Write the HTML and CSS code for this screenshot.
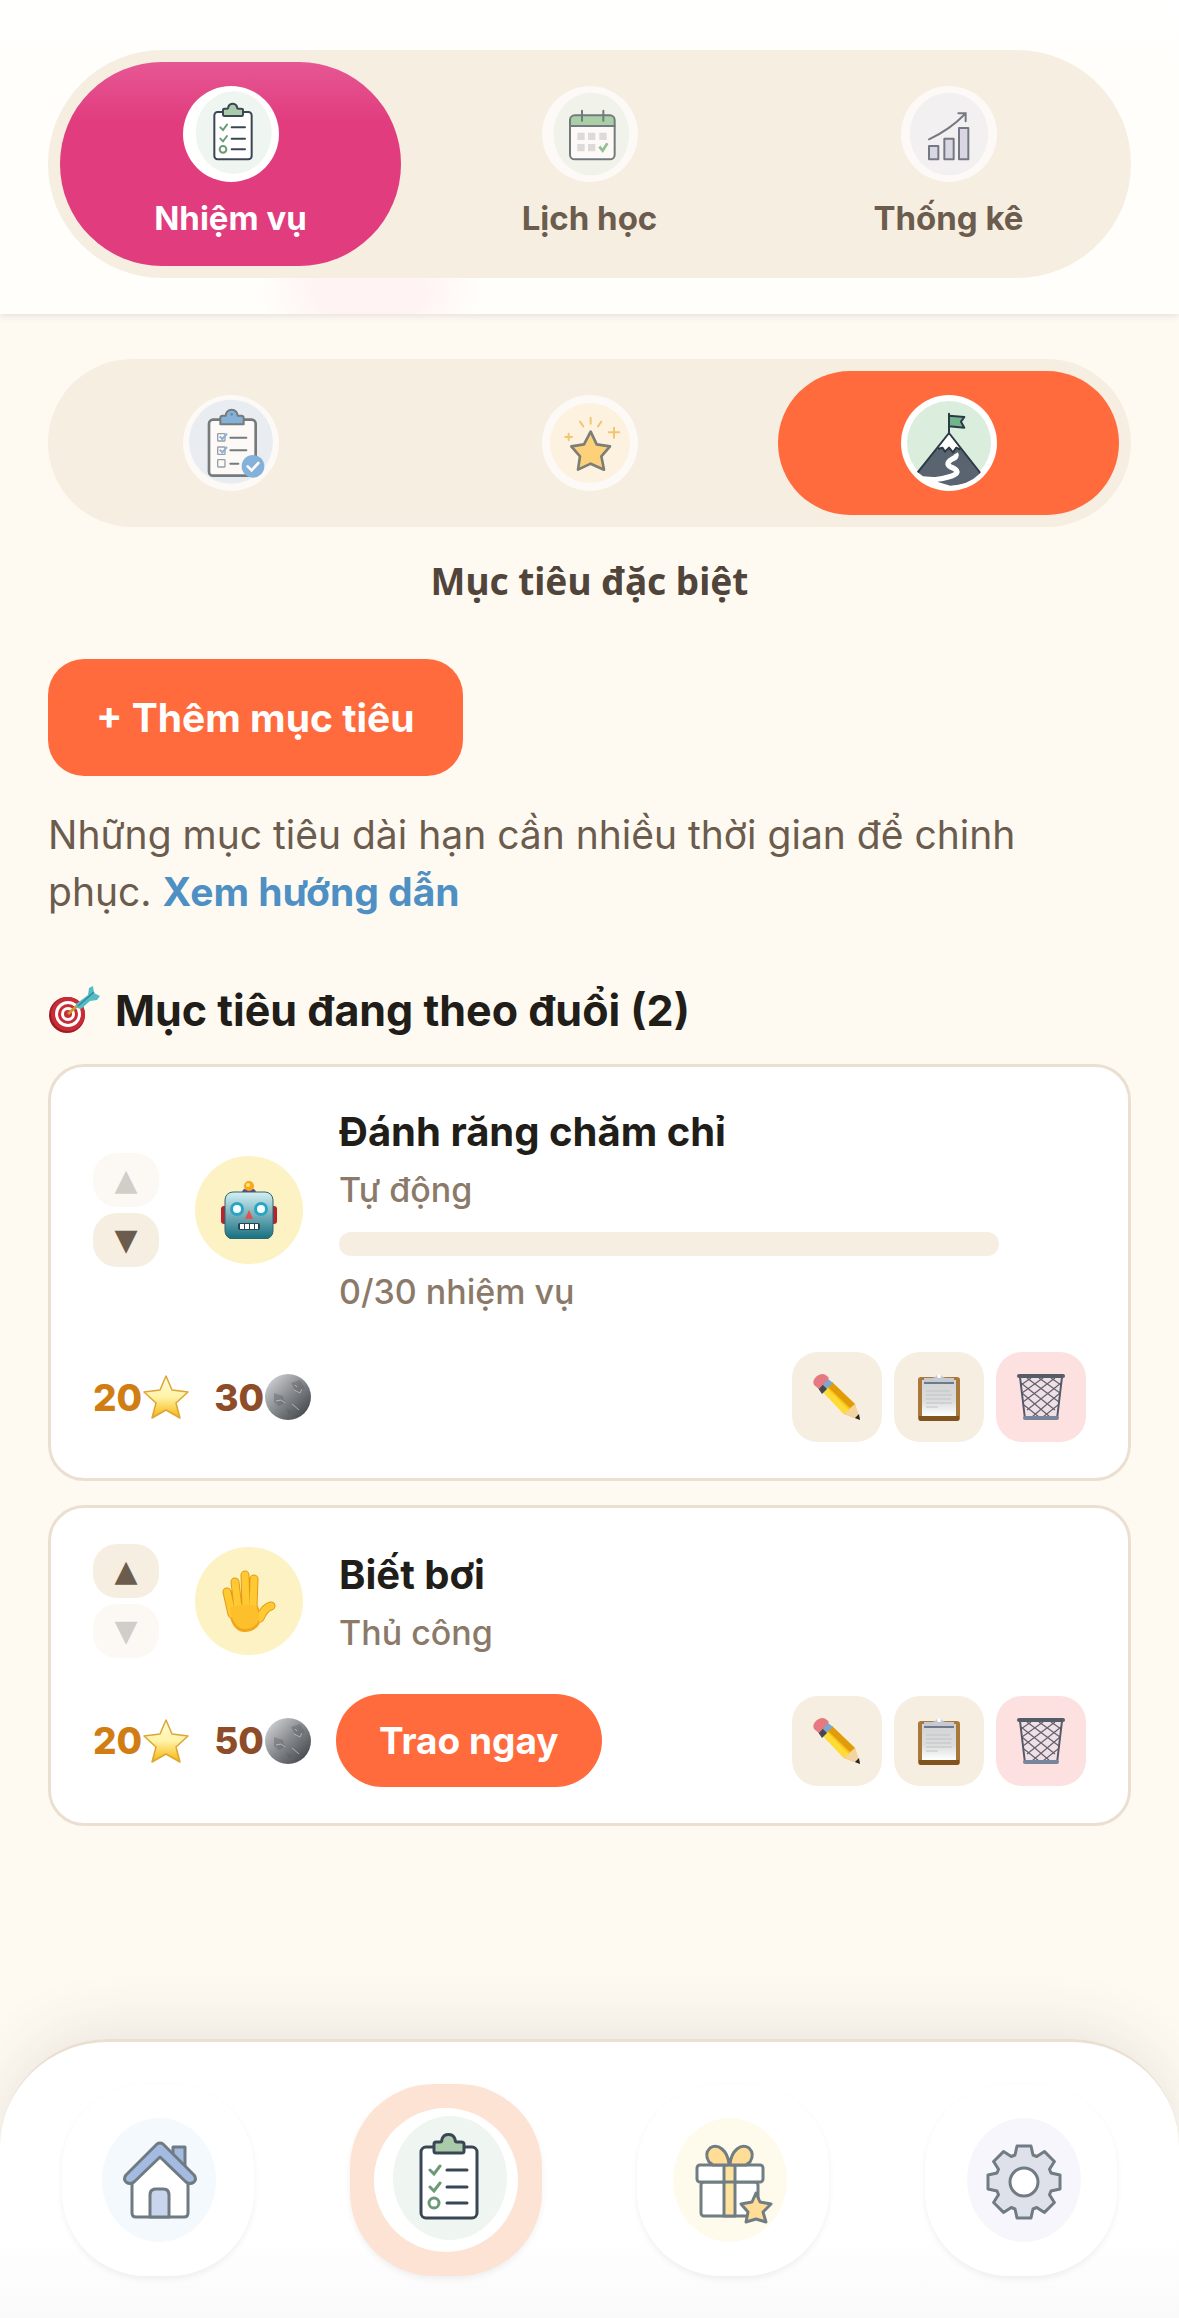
FILE: index.html
```html
<!DOCTYPE html>
<html lang="vi">
<head>
  <meta charset="UTF-8">
  <meta name="viewport" content="width=device-width, initial-scale=1.0">
  <title>Mục tiêu đặc biệt</title>
  <link rel="stylesheet" href="styles.css">
</head>
<body>

<!-- Icon dùng chung -->
<svg class="sprite" aria-hidden="true">
  <defs>
    <linearGradient id="g-star" x1="0" y1="0" x2="0" y2="1">
      <stop offset="0" stop-color="#fffbe0"/><stop offset=".5" stop-color="#fff3a6"/><stop offset="1" stop-color="#f7b50a"/>
    </linearGradient>
    <linearGradient id="g-moon" x1="0" y1="0" x2="1" y2="1">
      <stop offset="0" stop-color="#dfe1e4"/><stop offset=".5" stop-color="#85888c"/><stop offset="1" stop-color="#34373b"/>
    </linearGradient>
    <linearGradient id="g-robot" x1="0" y1="0" x2="0" y2="1">
      <stop offset="0" stop-color="#d3f1f5"/><stop offset=".45" stop-color="#7fb4bf"/><stop offset="1" stop-color="#156f80"/>
    </linearGradient>
    <linearGradient id="g-paper" x1="0" y1="0" x2="0" y2="1">
      <stop offset="0" stop-color="#d2d3d4"/><stop offset=".6" stop-color="#dcdddd"/><stop offset="1" stop-color="#ffffff"/>
    </linearGradient>
  </defs>

  <symbol id="i-list" viewBox="0 0 144 144">
    <ellipse cx="76" cy="70" rx="57" ry="62" fill="#eff5f0"/>
    <rect x="47" y="39" width="56" height="71" rx="5" fill="#fff" stroke="#3b4655" stroke-width="3"/>
    <path d="M60 36q0-2 2-2h4q2 0 2-3a7 7 0 0 1 13 0q0 3 2 3h4q3 0 3 2v7q0 2-2 2H62q-2 0-2-2z" fill="#a9cbaa" stroke="#3b4655" stroke-width="3"/>
    <path d="M56 62l4 4 6-8M56 79l4 4 6-8" fill="none" stroke="#6c9a76" stroke-width="3" stroke-linecap="round"/>
    <circle cx="60" cy="95" r="5" fill="none" stroke="#6c9a76" stroke-width="3"/>
    <path d="M73 62h20M73 79h20M73 95h20" stroke="#3b4655" stroke-width="3" stroke-linecap="round"/>
  </symbol>

  <symbol id="i-calendar" viewBox="0 0 144 144">
    <ellipse cx="74" cy="72" rx="57" ry="62" fill="#f0f6ee"/>
    <rect x="42" y="44" width="67" height="66" rx="7" fill="#fff"/>
    <path d="M42 60v-9q0-7 7-7h53q7 0 7 7v9z" fill="#8bc28f"/>
    <path d="M42 60h67M60 37v15M92 37v15" stroke="#3c4a56" stroke-width="3" stroke-linecap="round"/>
    <rect x="42" y="44" width="67" height="66" rx="7" fill="none" stroke="#3c4a56" stroke-width="3"/>
    <path d="M53 70h11v11H53zM69 70h11v11H69zM86 70h11v11H86zM53 87h11v11H53zM69 87h11v11H69z" fill="#d3d2d6"/>
    <path d="M86 91l5 6 7-11" fill="none" stroke="#69ad72" stroke-width="4"/>
  </symbol>

  <symbol id="i-chart" viewBox="0 0 144 144">
    <ellipse cx="72" cy="72" rx="59" ry="62" fill="#f3f1f9"/>
    <g fill="#cfcde6" stroke="#3f4a5a" stroke-width="3" stroke-linejoin="round">
      <rect x="42" y="90" width="14" height="20"/>
      <rect x="65" y="79" width="14" height="31"/>
      <rect x="87" y="63" width="14" height="47"/>
    </g>
    <path d="M42 80Q74 65 96 42M86 41h11v12" fill="none" stroke="#3f4a5a" stroke-width="3" stroke-linecap="round"/>
  </symbol>

  <symbol id="i-tasks" viewBox="0 0 144 144">
    <circle cx="72" cy="70" r="63" fill="#e4edf8"/>
    <rect x="39" y="37" width="70" height="84" rx="6" fill="#fff" stroke="#3f4a50" stroke-width="4"/>
    <path d="M56 34q0-3 4-3h4a9 9 0 0 1 18 0h5q4 0 4 3v10H56z" fill="#5598d8" stroke="#3f4a50" stroke-width="3" stroke-linejoin="round"/>
    <circle cx="73" cy="29" r="2" fill="#2f5e90"/>
    <g fill="none" stroke="#6c7f94" stroke-width="2">
      <rect x="52" y="58" width="11" height="11" rx="1"/>
      <rect x="52" y="78" width="11" height="11" rx="1"/>
      <rect x="52" y="97" width="11" height="11" rx="1"/>
    </g>
    <path d="M55 62l4 4 7-8M55 82l4 4 7-8" fill="none" stroke="#5e95d0" stroke-width="3"/>
    <path d="M71 64h24M71 83h24M71 103h12" stroke="#3f4a50" stroke-width="3" stroke-linecap="round"/>
    <circle cx="105" cy="107" r="17" fill="#5598d8"/>
    <path d="M97 107l6 6 10-11" fill="none" stroke="#fff" stroke-width="4" stroke-linecap="round"/>
  </symbol>

  <symbol id="i-star" viewBox="0 0 144 144">
    <circle cx="72" cy="72" r="60" fill="#fff5df"/>
    <path d="M73 55l9 19 20 3-13 15 4 20-20-9-19 9 3-20-13-15 19-3z" fill="#ffc54e" stroke="#4a4f4c" stroke-width="4" stroke-linejoin="round"/>
    <path d="M73 34v9M57 40l5 7M89 40l-5 7M108 49v15M100 56h16M40 58v10M35 63h10" stroke="#f2b544" stroke-width="3" stroke-linecap="round"/>
  </symbol>

  <symbol id="i-mountain" viewBox="0 0 144 144">
    <clipPath id="c-round"><circle cx="72" cy="72" r="65"/></clipPath>
    <g clip-path="url(#c-round)">
      <circle cx="72" cy="72" r="63" fill="#dbeedd"/>
      <path d="M15 122l14-3 90-2v30H15z" fill="#fff"/>
      <path d="M72 57L25 116l8 6 30 2-9 6 20 6q34-3 45-18z" fill="#5a6470"/>
      <path d="M72 57L54 82l7-3 5 6 6-6 6 8 5-8 6 2z" fill="#fff"/>
      <path d="M82 88q3 5-5 8-14 8 2 14 13 7-8 13-16 5-44 5" fill="none" stroke="#fff" stroke-width="8"/>
      <path d="M25 116L72 57l47 60M55 81l7-2 4 6 6-6 6 7 5-7 6 3" fill="none" stroke="#2d3947" stroke-width="3" stroke-linejoin="round"/>
      <path d="M72 31l23 2-5 7 5 9-23-2z" fill="#6fb58b" stroke="#2d3947" stroke-width="3" stroke-linejoin="round"/>
      <path d="M72 28v30" stroke="#2d3947" stroke-width="3" stroke-linecap="round"/>
    </g>
  </symbol>

  <symbol id="i-home" viewBox="0 0 144 144">
    <ellipse cx="73" cy="72" rx="57" ry="62" fill="#eff7fd"/>
    <g stroke="#34424f" stroke-width="3" stroke-linejoin="round">
      <path d="M46 72l28-26 28 26v33q0 4-4 4H50q-4 0-4-4z" fill="#fff"/>
      <path d="M87 39h12v26L87 51z" fill="#7d9fd4"/>
      <path d="M64 109V87q0-6 6-6h7q6 0 6 6v22z" fill="#b3c3e6"/>
      <path d="M71 36q3-2 6 0l31 31q3 4 0 7-4 3-8 0L74 49 48 74q-4 3-8 0-3-3 0-7z" fill="#7d9fd4"/>
    </g>
  </symbol>

  <symbol id="i-gift" viewBox="0 0 144 144">
    <ellipse cx="69" cy="72" rx="57" ry="62" fill="#fffae4"/>
    <g stroke="#34484f" stroke-width="3" stroke-linejoin="round">
      <rect x="40" y="74" width="57" height="34" rx="3" fill="#fff"/>
      <rect x="36" y="57" width="66" height="17" rx="3" fill="#fff"/>
      <path d="M63 57h11v51H63zM63 74h11" fill="#ffd778"/>
      <path d="M68 56q-1-10-7-15-6-5-12-1-6 6-1 14l4 3h15zM69 56q1-10 7-15 6-5 12-1 6 6 1 14l-4 3H70z" fill="#ffcf6a"/>
      <path d="M95 85l4 9 11 2-8 8 3 10-10-3-10 3 2-10-7-8 11-2z" fill="#ffcf6a"/>
    </g>
  </symbol>

  <symbol id="i-gear" viewBox="0 0 144 144">
    <ellipse cx="75" cy="72" rx="57" ry="62" fill="#f3f3fb"/>
    <g transform="translate(75 74)" stroke="#34444f" stroke-width="3" stroke-linejoin="round">
      <path d="M-9-27L-7-36L7-36L9-27L12.7-25.5L20.5-30.4L30.4-20.5L25.5-12.7L27-9L36-7L36 7L27 9L25.5 12.7L30.4 20.5L20.5 30.4L12.7 25.5L9 27L7 36L-7 36L-9 27L-12.7 25.5L-20.5 30.4L-30.4 20.5L-25.5 12.7L-27 9L-36 7L-36-7L-27-9L-25.5-12.7L-30.4-20.5L-20.5-30.4L-12.7-25.5Z" fill="#d2d5e2"/>
      <circle r="14" fill="#fff"/>
    </g>
  </symbol>

  <symbol id="e-star" viewBox="0 0 48 48">
    <path d="M24 3l6 14 16 2-12 11 4 15-14-8-14 8 4-15L2 19l16-2z" fill="url(#g-star)" stroke="#dca534" stroke-width="1.5" stroke-linejoin="round"/>
  </symbol>

  <symbol id="e-moon" viewBox="0 0 48 48">
    <circle cx="24" cy="24" r="23" fill="url(#g-moon)"/>
    <path d="M10 20l9 3 2 7-6 3-5-4zM27 10l9-3 5 8-5 6-4-2zM22 36l6 2-3 4z" fill="#5b5e63" opacity=".4"/>
    <path d="M30 17l6 3 2-4M12 28l5-1 4 3M28 31l7 6M31 12l2 2" fill="none" stroke="#c3c6c9" opacity=".8"/>
  </symbol>

  <symbol id="e-pencil" viewBox="0 0 48 48">
    <path d="M10 19L19 9l23 22 5 16-16-6z" fill="#f8c51c"/>
    <path d="M15 14l4-5 23 22-5 4z" fill="#e29c0b"/>
    <path d="M10 19l4-4 22 22-5 4z" fill="#ffdc35"/>
    <path d="M31 41l11-10 5 16z" fill="#f3d3a0"/>
    <path d="M42 45l4-4 1 6z" fill="#26242a"/>
    <path d="M5 14l9-9 6 5-11 10z" fill="#7ea7cf"/>
    <path d="M5 15l4-4 5 5-5 5z" fill="#45474e"/>
    <path d="M1 12Q-1 7 4 3q6-4 10 0l2 2-10 11z" fill="#e5797f"/>
  </symbol>

  <symbol id="e-clipboard" viewBox="0 0 48 48">
    <rect x="3" y="4" width="42" height="44" rx="3" fill="#a9783a"/>
    <path d="M4 43h40v3q0 2-2 2H6q-2 0-2-2z" fill="#80531f"/>
    <rect x="7" y="7" width="34" height="36" fill="url(#g-paper)"/>
    <path d="M11 18h24M11 22h26M11 26h25M11 30h26M11 34h12" stroke="#bfc1c3"/>
    <path d="M9 5h8q3 0 4-2 3-4 6 0 1 2 4 2h8v4H9z" fill="#c3cad3"/>
    <path d="M9 10h30" stroke="#717a83" stroke-width="2"/>
    <circle cx="24" cy="3" r="2" fill="#fff"/>
  </symbol>

  <symbol id="e-trash" viewBox="0 0 48 48">
    <path d="M3 4l5 42h32l5-42z" fill="#e6e0e6" opacity=".5"/>
    <path d="M4 10l34 27M5 20l28 24M7 32l15 12M10 5l32 24M22 5l21 15M34 5l10 7M44 10L10 37M43 20L15 44M41 32L26 44M38 5L6 29M26 5L5 20M14 5L4 12" stroke="#5f6270" stroke-width="1.2"/>
    <path d="M3 4l5 42M45 4l-5 42" stroke="#555968" stroke-width="2"/>
    <path d="M2 3h44" stroke="#565b68" stroke-width="4" stroke-linecap="round"/>
    <path d="M8 45h32" stroke="#79859a" stroke-width="4" stroke-linecap="round"/>
  </symbol>
</svg>

<header class="topbar">
  <nav class="tabs">
    <a class="tab tab-pink active" href="#nhiem-vu">
      <svg class="tab-icon"><use href="#i-list"/></svg>
      <span>Nhiệm vụ</span>
    </a>
    <a class="tab" href="#lich-hoc">
      <svg class="tab-icon"><use href="#i-calendar"/></svg>
      <span>Lịch học</span>
    </a>
    <a class="tab" href="#thong-ke">
      <svg class="tab-icon"><use href="#i-chart"/></svg>
      <span>Thống kê</span>
    </a>
  </nav>
</header>

<main class="content">
  <div class="tabs">
    <button class="tab" type="button" aria-label="Nhiệm vụ hằng ngày"><svg class="tab-icon"><use href="#i-tasks"/></svg></button>
    <button class="tab" type="button" aria-label="Nhiệm vụ thưởng"><svg class="tab-icon"><use href="#i-star"/></svg></button>
    <button class="tab tab-orange active" type="button" aria-label="Mục tiêu đặc biệt"><svg class="tab-icon"><use href="#i-mountain"/></svg></button>
  </div>
  <h1 class="tab-title">Mục tiêu đặc biệt</h1>

  <button class="btn btn-add" type="button">+ Thêm mục tiêu</button>
  <p class="intro">Những mục tiêu dài hạn cần nhiều thời gian để chinh phục. <a href="#huong-dan">Xem hướng dẫn</a></p>

  <h2 class="section-title">
    <svg class="target" viewBox="0 0 52 48" aria-hidden="true">
      <circle cx="19" cy="29" r="18" fill="#9d1b25"/>
      <circle cx="20" cy="28" r="17" fill="#c92c35"/>
      <circle cx="20" cy="28" r="13" fill="#fff"/>
      <circle cx="20" cy="28" r="10" fill="#c92c35"/>
      <circle cx="20" cy="28" r="7" fill="#fff"/>
      <circle cx="20" cy="28" r="4" fill="#c92c35"/>
      <path d="M20 28l10-9" stroke="#d09a2a" stroke-width="3"/>
      <path d="M29 22l-1-4 12-9 1-7 4-2 1 7 6 3-3 4-7 1-9 8z" fill="#55bcc6"/>
      <path d="M30 20L46 6" stroke="#2c8995" stroke-width="1.5"/>
    </svg>
    Mục tiêu đang theo đuổi (2)
  </h2>

  <ul class="goals">
    <li class="goal">
      <div class="goal-main">
        <div class="order">
          <button type="button" aria-label="Lên" disabled>▲</button>
          <button type="button" aria-label="Xuống">▼</button>
        </div>
        <div class="avatar">
          <svg width="56" height="58" viewBox="0 0 56 58" aria-hidden="true">
            <rect x="0" y="25" width="8" height="18" rx="3" fill="#b32430"/>
            <rect x="48" y="25" width="8" height="18" rx="3" fill="#b32430"/>
            <path d="M21 12q0-5 7-5t7 5z" fill="#67458b"/>
            <circle cx="28" cy="5" r="5" fill="#f6a91d"/>
            <circle cx="27" cy="4" r="2" fill="#ffe17a"/>
            <rect x="4" y="11" width="48" height="47" rx="8" fill="url(#g-robot)" stroke="#33626c"/>
            <circle cx="16" cy="28" r="7" fill="#2ba4c4"/>
            <circle cx="40" cy="28" r="7" fill="#2ba4c4"/>
            <circle cx="16" cy="28" r="4" fill="#f2feff"/>
            <circle cx="40" cy="28" r="4" fill="#f2feff"/>
            <path d="M28 29l4 9h-8z" fill="#e2524b"/>
            <rect x="17" y="42" width="22" height="7" rx="2" fill="#27474e"/>
            <path d="M19 43h4v5h-4zM24 43h4v5h-4zM29 43h4v5h-4zM34 43h3v5h-3z" fill="#fff"/>
          </svg>
        </div>
        <div class="info">
          <h3>Đánh răng chăm chỉ</h3>
          <p>Tự động</p>
          <progress id="goal-1" value="0" max="30"></progress>
          <label for="goal-1">0/30 nhiệm vụ</label>
        </div>
      </div>
      <div class="goal-foot">
        <span class="reward stars">20<svg><use href="#e-star"/></svg></span>
        <span class="reward moons">30<svg><use href="#e-moon"/></svg></span>
        <div class="actions">
          <button type="button" aria-label="Sửa"><svg><use href="#e-pencil"/></svg></button>
          <button type="button" aria-label="Sao chép"><svg><use href="#e-clipboard"/></svg></button>
          <button class="danger" type="button" aria-label="Xóa"><svg><use href="#e-trash"/></svg></button>
        </div>
      </div>
    </li>

    <li class="goal">
      <div class="goal-main">
        <div class="order">
          <button type="button" aria-label="Lên">▲</button>
          <button type="button" aria-label="Xuống" disabled>▼</button>
        </div>
        <div class="avatar">
          <svg width="54" height="62" viewBox="0 0 54 62" aria-hidden="true">
            <g fill="none" stroke="#e39a13" stroke-width="9" stroke-linecap="round">
              <path d="M5 22l5 22M13 12l3 26M23 5l1 32M32 9l-1 28M49 36q-6 1-11 12"/>
            </g>
            <path d="M6 38q14-8 30-2l3 8q1 17-17 18Q9 61 6 38z" fill="#f0a51a"/>
            <g fill="none" stroke="#ffc933" stroke-width="7" stroke-linecap="round">
              <path d="M5 22l5 22M13 12l3 26M23 5l1 32M32 9l-1 28M49 36q-6 1-11 12"/>
            </g>
            <path d="M8 38q14-6 26-2l3 9q0 14-15 14Q11 58 8 38z" fill="#fdc02c"/>
          </svg>
        </div>
        <div class="info">
          <h3>Biết bơi</h3>
          <p>Thủ công</p>
        </div>
      </div>
      <div class="goal-foot">
        <span class="reward stars">20<svg><use href="#e-star"/></svg></span>
        <span class="reward moons">50<svg><use href="#e-moon"/></svg></span>
        <button class="btn btn-give" type="button">Trao ngay</button>
        <div class="actions">
          <button type="button" aria-label="Sửa"><svg><use href="#e-pencil"/></svg></button>
          <button type="button" aria-label="Sao chép"><svg><use href="#e-clipboard"/></svg></button>
          <button class="danger" type="button" aria-label="Xóa"><svg><use href="#e-trash"/></svg></button>
        </div>
      </div>
    </li>
  </ul>
</main>

<nav class="bottom-nav">
  <a href="#trang-chu" aria-label="Trang chủ"><svg><use href="#i-home"/></svg></a>
  <a class="active" href="#nhiem-vu" aria-label="Nhiệm vụ"><svg><use href="#i-list"/></svg></a>
  <a href="#qua" aria-label="Quà"><svg><use href="#i-gift"/></svg></a>
  <a href="#cai-dat" aria-label="Cài đặt"><svg><use href="#i-gear"/></svg></a>
</nav>

</body>
</html>
```

FILE: styles.css
```css
* {
  box-sizing: border-box;
}

body {
  margin: 0;
  min-height: 100vh;
  padding-bottom: 300px;
  font-family: Inter, "Noto Sans", sans-serif;
  font-size: 39px;
  line-height: 57px;
  background-color: #fefaf2;
  color: #211d19;
}

h1, h2, h3, p, ul {
  margin: 0;
  padding: 0;
}

button {
  border: none;
  font-family: inherit;
  cursor: pointer;
}

a {
  text-decoration: none;
}

svg {
  display: block;
}

.sprite {
  position: absolute;
  width: 0;
  height: 0;
}

/* Thanh trên cùng */
.topbar {
  padding: 50px 48px 36px;
  background: radial-gradient(ellipse 110px 70px at 370px 290px, #fff4f3 50%, transparent),
    linear-gradient(#ffffff, #fffefb 60px);
  box-shadow: 0 2px 6px rgba(60, 60, 50, 0.12);
}

.tabs {
  display: grid;
  grid-template-columns: repeat(3, 1fr);
  gap: 18px;
  padding: 12px;
  border-radius: 999px;
  background-color: #f6eee1;
}

.tab {
  display: flex;
  flex-direction: column;
  align-items: center;
  gap: 12px;
  padding: 24px 0;
  border-radius: 999px;
  background: none;
  color: #6b5c4d;
  font-size: 33px;
  font-weight: 700;
  line-height: 48px;
}

.tab-icon {
  width: 96px;
  height: 96px;
  border-radius: 50%;
  background-color: #fff;
  opacity: 0.7;
}

.tab.active .tab-icon {
  opacity: 1;
}

.tab-pink.active {
  background: linear-gradient(#e65793, #e13c7e 60px);
  color: #fff;
}

.tab-orange.active {
  background-color: #ff6b3d;
}

/* Nội dung */
.content {
  padding: 45px 48px 0;
}

.tab-title {
  margin-top: 24px;
  font-family: "Noto Sans", sans-serif;
  font-size: 37px;
  line-height: 60px;
  text-align: center;
  color: #51453b;
}

.btn {
  background-color: #ff6b3d;
  color: #fff;
  font-weight: 700;
}

.btn-add {
  display: block;
  margin-top: 48px;
  padding: 30px 48px;
  border-radius: 36px;
  font-size: 39px;
  line-height: 57px;
}

.intro {
  margin-top: 30px;
  padding-right: 48px;
  color: #6b5c4d;
}

.intro a {
  color: #4f90c4;
  font-weight: 700;
}

.section-title {
  display: flex;
  align-items: center;
  gap: 15px;
  margin-top: 60px;
  font-size: 43px;
  line-height: 60px;
}

.target {
  width: 52px;
  height: 48px;
}

.goals {
  display: flex;
  flex-direction: column;
  gap: 24px;
  margin-top: 24px;
  list-style: none;
}

.goal {
  display: flex;
  flex-direction: column;
  gap: 36px;
  padding: 36px 42px;
  border: 3px solid #ebdfd2;
  border-radius: 36px;
  background-color: #fff;
}

.goal-main {
  display: flex;
  align-items: center;
  gap: 36px;
}

.order {
  display: flex;
  flex-direction: column;
  gap: 6px;
}

.order button {
  width: 66px;
  height: 54px;
  padding: 0;
  border-radius: 24px;
  background-color: #f6eee1;
  color: #6b5c4d;
  font-family: "DejaVu Sans", sans-serif;
  font-size: 30px;
  line-height: 48px;
}

.order button:disabled {
  opacity: 0.3;
}

.avatar {
  display: flex;
  align-items: center;
  justify-content: center;
  width: 108px;
  height: 108px;
  border-radius: 50%;
  background-color: #fdf2c4;
}

.info {
  flex: 1;
  color: #8b7a69;
  font-size: 34px;
  font-weight: 500;
  line-height: 48px;
}

.info h3 {
  margin-bottom: 6px;
  color: #211d19;
  font-size: 40px;
  line-height: 57px;
}

.info progress {
  display: block;
  width: 100%;
  max-width: 660px;
  height: 24px;
  margin: 18px 0 12px;
  appearance: none;
  border: none;
  border-radius: 12px;
  background-color: #f6eee1;
  overflow: hidden;
}

.info progress::-webkit-progress-bar {
  background-color: #f6eee1;
}

.info progress::-webkit-progress-value {
  background-color: #ff6b3d;
}

.info label {
  display: block;
}

.goal-foot {
  display: flex;
  align-items: center;
  gap: 24px;
}

.reward {
  display: flex;
  align-items: center;
  font-size: 37px;
  font-weight: 800;
}

.reward svg {
  width: 48px;
  height: 48px;
}

.stars {
  color: #d07e14;
}

.moons {
  color: #8e4d28;
}

.btn-give {
  padding: 21px 43px;
  border-radius: 999px;
  font-size: 37px;
  line-height: 51px;
}

.actions {
  display: flex;
  gap: 12px;
  margin-left: auto;
}

.actions button {
  display: flex;
  align-items: center;
  justify-content: center;
  width: 90px;
  height: 90px;
  padding: 0;
  border-radius: 26px;
  background-color: #f6eee1;
}

.actions .danger {
  background-color: #fce1e0;
}

.actions svg {
  width: 48px;
  height: 48px;
}

/* Thanh điều hướng dưới */
.bottom-nav {
  position: fixed;
  right: 0;
  bottom: 0;
  left: 0;
  display: grid;
  grid-template-columns: repeat(4, 1fr);
  justify-items: center;
  gap: 24px;
  padding: 42px 26px;
  border-top: 3px solid #ebdfd2;
  border-radius: 108px 108px 0 0;
  background: linear-gradient(#ffffff 70%, #fafafa);
  box-shadow: 0 -12px 60px rgba(60, 60, 40, 0.1);
}

.bottom-nav a {
  display: flex;
  align-items: center;
  justify-content: center;
  width: 192px;
  height: 192px;
  border-radius: 84px;
  background-color: #fff;
  box-shadow: 0 3px 6px rgba(0, 0, 0, 0.06);
}

.bottom-nav svg {
  width: 144px;
  height: 144px;
  border-radius: 50%;
  background-color: #fff;
  opacity: 0.7;
}

.bottom-nav .active {
  background-color: #fde3d4;
}

.bottom-nav .active svg {
  opacity: 1;
}
```
